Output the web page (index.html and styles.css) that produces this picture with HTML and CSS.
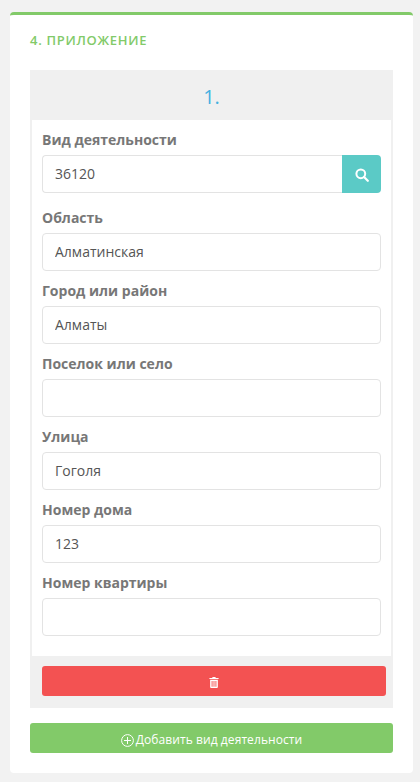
FILE: index.html
```html
<!DOCTYPE html>
<html lang="ru">
<head>
    <meta charset="UTF-8">
    <meta name="viewport" content="width=device-width, initial-scale=1.0">
    <title>Приложение</title>
    <link rel="stylesheet" href="styles.css">
</head>
<body>
    <div class="card">
        <h2 class="card-title">4. Приложение</h2>

        <div class="activity">
            <div class="activity-number">1.</div>

            <div class="activity-fields">
                <div class="field field-search">
                    <label class="field-label">Вид деятельности</label>
                    <div class="input-group">
                        <input class="input input-joined" type="text" value="36120">
                        <button class="search-button" type="button" aria-label="Поиск">
                            <svg class="search-icon" width="14" height="14" viewBox="0 0 14 14">
                                <circle cx="5.8" cy="5.8" r="4.4" fill="none" stroke="#fff" stroke-width="2"/>
                                <path d="M9 9l3.8 3.8" fill="none" stroke="#fff" stroke-width="2.2" stroke-linecap="round"/>
                            </svg>
                        </button>
                    </div>
                </div>
                <div class="field">
                    <label class="field-label">Область</label>
                    <input class="input" type="text" value="Алматинская">
                </div>
                <div class="field">
                    <label class="field-label">Город или район</label>
                    <input class="input" type="text" value="Алматы">
                </div>
                <div class="field">
                    <label class="field-label">Поселок или село</label>
                    <input class="input" type="text">
                </div>
                <div class="field">
                    <label class="field-label">Улица</label>
                    <input class="input" type="text" value="Гоголя">
                </div>
                <div class="field">
                    <label class="field-label">Номер дома</label>
                    <input class="input" type="text" value="123">
                </div>
                <div class="field">
                    <label class="field-label">Номер квартиры</label>
                    <input class="input" type="text">
                </div>
            </div>

            <div class="activity-footer">
                <button class="button button-delete" type="button" aria-label="Удалить">
                    <svg width="10" height="11" viewBox="0 0 10 12">
                        <path d="M3.5 0h3l.5 1h3v1.3H0V1h3z" fill="#fff"/>
                        <path fill-rule="evenodd" d="M.8 3h8.4v8a1 1 0 0 1-1 1H1.8a1 1 0 0 1-1-1zM2.4 4.3v6.2h1V4.3zm2.1 0v6.2h1V4.3zm2.1 0v6.2h1V4.3z" fill="#fff"/>
                    </svg>
                </button>
            </div>
        </div>

        <button class="button button-add" type="button">
            <svg class="add-icon" width="13" height="13" viewBox="0 0 13 13">
                <circle cx="6.5" cy="6.5" r="5.9" fill="none" stroke="#fff" stroke-width="1"/>
                <path d="M6.5 3v7M3 6.5h7" fill="none" stroke="#fff" stroke-width="1"/>
            </svg>
            Добавить вид деятельности
        </button>
    </div>
</body>
</html>
```

FILE: styles.css
```css
body {
    margin: 0;
    padding: 12px 7px 9px 10px;
    background: #f2f2f2;
    font-family: 'Open Sans', sans-serif;
    color: #555;
}

.card {
    background: #fff;
    border-top: 3px solid #82ca69;
    border-radius: 4px;
    padding: 0 20px 20px;
}

.card-title {
    margin: 0;
    padding: 17px 0 21px;
    height: 17px;
    line-height: 17px;
    font-size: 13px;
    font-weight: 600;
    letter-spacing: 0.7px;
    text-transform: uppercase;
    color: #82ca69;
}

.activity {
    background: #f0f0f0;
    padding: 0 2px;
}

.activity-number {
    height: 50px;
    line-height: 53px;
    text-align: center;
    font-size: 20px;
    color: #45b0e0;
}

.activity-fields {
    background: #fff;
    padding: 10px 10px 20px;
}

.field {
    margin-bottom: 10px;
}

.field-search {
    margin-bottom: 15px;
}

.field:last-child {
    margin-bottom: 0;
}

.field-label {
    display: block;
    height: 25px;
    line-height: 20px;
    font-size: 14px;
    font-weight: 700;
    color: #777;
}

.input {
    display: block;
    box-sizing: border-box;
    width: 100%;
    height: 38px;
    padding: 0 12px 1px;
    background: #fff;
    border: 1px solid #e3e3e3;
    border-radius: 4px;
    font-family: 'Open Sans', sans-serif;
    font-size: 14px;
    color: #555;
}

.input-group {
    display: flex;
}

.input-joined {
    flex: 1;
    min-width: 0;
    border-right: none;
    border-radius: 4px 0 0 4px;
}

.search-button {
    display: flex;
    align-items: center;
    justify-content: center;
    width: 39px;
    height: 38px;
    padding: 0;
    background: #5bcac6;
    border: none;
    border-radius: 0 4px 4px 0;
}

.search-icon {
    margin-top: 2px;
}

.activity-footer {
    padding: 10px 5px 12px 10px;
}

.button {
    display: flex;
    align-items: center;
    justify-content: center;
    width: 100%;
    height: 30px;
    padding: 0;
    border: none;
    border-radius: 3px;
    color: #fff;
    font-family: 'Open Sans', sans-serif;
    font-size: 12px;
}

.button-delete {
    padding-top: 2px;
    background: #f35252;
}

.button-add {
    gap: 2px;
    margin-top: 15px;
    padding-top: 2px;
    background: #82ca69;
    letter-spacing: 0.08px;
}

.add-icon {
    margin-top: 2px;
}
```
